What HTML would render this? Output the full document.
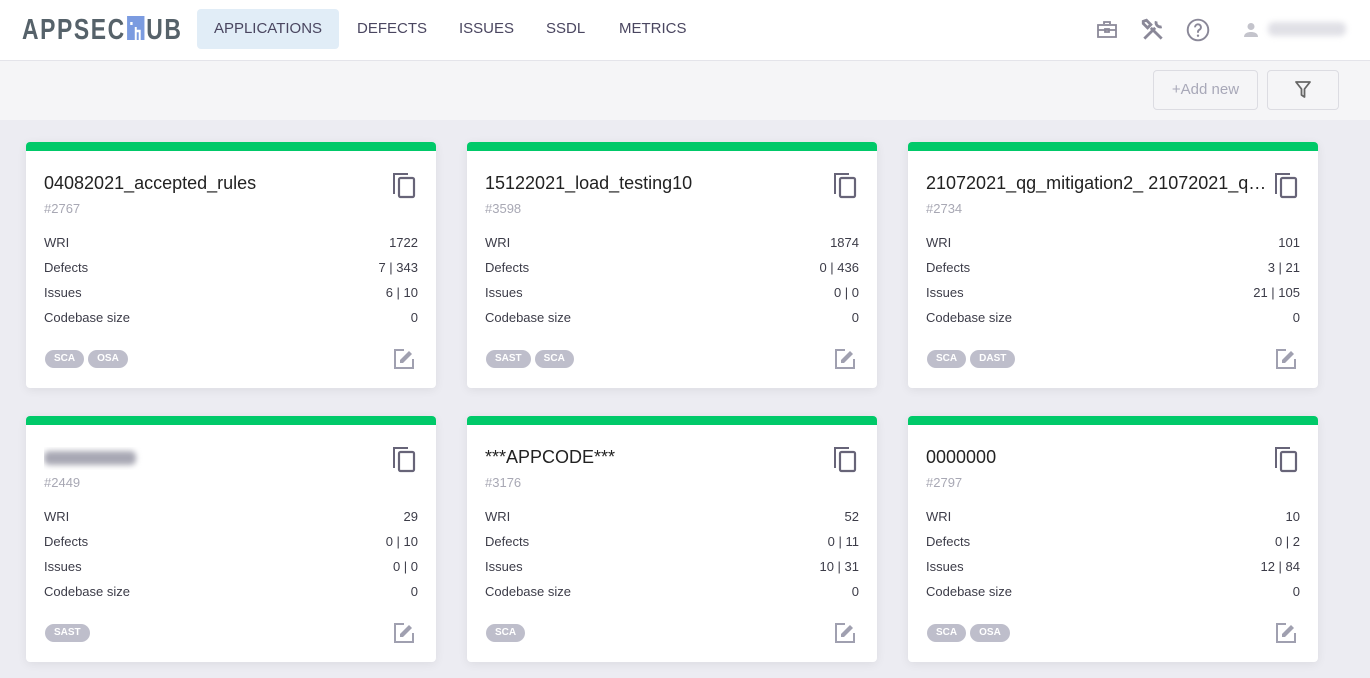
<!DOCTYPE html>
<html><head><meta charset="utf-8"><style>
*{box-sizing:border-box;margin:0;padding:0}
body{width:1370px;height:678px;overflow:hidden;background:#ececf2;font-family:"Liberation Sans",sans-serif;position:relative}
.hdr{position:absolute;left:0;top:0;width:1370px;height:61px;background:#fff;border-bottom:1px solid #e4e4ea}
.logo{position:absolute;left:22px;top:14px;font-size:29px;font-weight:bold;color:#56626a;letter-spacing:2px;transform:scaleX(0.79);transform-origin:left;white-space:nowrap}
.logo .h{display:inline-block;width:22px;height:24px;background:#7b9be0;vertical-align:-2px;margin:0 2px;position:relative}
.nav{position:absolute;top:9px;height:40px;line-height:40px;font-size:15px;color:#4a4660}
.toolbar{position:absolute;left:0;top:61px;width:1370px;height:59px;background:#f5f5f7}
.btn{position:absolute;top:70px;height:40px;border:1px solid #dcdce2;border-radius:4px;background:#f5f5f7;color:#a8a8b8;font-size:15px;text-align:center;line-height:38px}
.card{position:absolute;width:410px;height:246px;background:#fff;border-radius:4px;box-shadow:0 2px 10px rgba(0,0,0,.07);overflow:hidden}
.card .bar{height:9px;background:#00c969}
.t{position:absolute;left:18px;top:31px;font-size:18px;color:#222;white-space:nowrap;width:330px;overflow:hidden;text-overflow:ellipsis}
.id{position:absolute;left:18px;top:59px;font-size:13px;color:#a8a8b4}
.row{position:absolute;left:18px;right:18px;font-size:13px;color:#3c3c48}
.row span{float:right}
.tags{position:absolute;left:19px;top:206px}
.tag{display:inline-block;height:18px;line-height:18px;padding:0 9px;border-radius:9px;background:#bebecb;color:#fff;font-size:10px;font-weight:bold;margin-right:4px}
.cp{position:absolute;right:20px;top:29px}
.ed{position:absolute;right:20px;top:205px}
</style></head><body>
<div class="hdr">
<div class="logo">APPSEC<span class="h"><svg width="22" height="24"><rect x="4" y="5" width="3" height="3" fill="#fff"/><path d="M11 10v14M11 14h5v10" stroke="#fff" stroke-width="2.5" fill="none"/></svg></span>UB</div>
<div class="nav" style="left:197px;width:142px;background:#e1edf7;border-radius:4px;text-align:center">APPLICATIONS</div>
<div class="nav" style="left:357px">DEFECTS</div>
<div class="nav" style="left:459px">ISSUES</div>
<div class="nav" style="left:546px">SSDL</div>
<div class="nav" style="left:619px">METRICS</div>
<svg style="position:absolute;left:1095px;top:18px" width="24" height="24" viewBox="0 0 24 24"><path d="M9 6V4h6v2M3 7h18v12H3zM3 12h18M10 11h4v3h-4z" fill="none" stroke="#8a8898" stroke-width="1.8"/></svg>
<svg style="position:absolute;left:1140px;top:17px" width="26" height="26" viewBox="0 0 24 24"><path d="M4 20L14 10M10 10L20 20M15 4a4 4 0 0 0 5 5M3 4l3-1 4 4-3 3-4-4z" fill="none" stroke="#8a8898" stroke-width="2.6"/></svg>
<svg style="position:absolute;left:1185px;top:17px" width="26" height="26" viewBox="0 0 24 24"><circle cx="12" cy="12" r="9.5" fill="none" stroke="#8a8898" stroke-width="1.8"/><path d="M9.3 9.5a2.7 2.7 0 1 1 3.8 2.4c-.8.4-1.1 1-1.1 2v.6" fill="none" stroke="#8a8898" stroke-width="1.8"/><circle cx="12" cy="17.3" r="1.1" fill="#8a8898"/></svg>
<svg style="position:absolute;left:1242px;top:21px" width="18" height="18" viewBox="0 0 18 18"><circle cx="9" cy="5.5" r="3.5" fill="#c4c4cc"/><path d="M2 16c0-4 4-5 7-5s7 1 7 5z" fill="#c4c4cc"/></svg>
<div style="position:absolute;left:1268px;top:22px;width:78px;height:14px;background:#e0e0e6;border-radius:6px;filter:blur(3px)"></div>
</div>
<div class="toolbar"></div>
<div class="btn" style="left:1153px;width:105px">+Add new</div>
<div class="btn" style="left:1267px;width:72px"><svg width="18" height="20" viewBox="0 0 18 20" style="margin-top:9px"><path d="M2 2h14l-5.5 7v8l-3-2V9z" fill="none" stroke="#666" stroke-width="1.8" stroke-linejoin="round"/></svg></div>

<div class="card" style="left:26px;top:142px"><div class="bar"></div><div class="t">04082021_accepted_rules</div><div class="id">#2767</div>
<div class="row" style="top:93px">WRI<span>1722</span></div><div class="row" style="top:118px">Defects<span>7 | 343</span></div><div class="row" style="top:143px">Issues<span>6 | 10</span></div><div class="row" style="top:168px">Codebase size<span>0</span></div>
<div class="tags"><span class="tag">SCA</span><span class="tag">OSA</span></div>
<svg class="cp" width="24" height="28" viewBox="0 0 24 28"><path d="M2 23V3h14" fill="none" stroke="#676478" stroke-width="2"/><rect x="7" y="7" width="15" height="19" rx="1.5" fill="none" stroke="#676478" stroke-width="2.2"/></svg>
<svg class="ed" width="24" height="24" viewBox="0 0 24 24"><path d="M12 3H3v18h18v-9" fill="none" stroke="#a0a0b0" stroke-width="2"/><path d="M8 16v-3l9-9 3 3-9 9z" fill="#a0a0b0"/></svg></div>

<div class="card" style="left:467px;top:142px"><div class="bar"></div><div class="t">15122021_load_testing10</div><div class="id">#3598</div>
<div class="row" style="top:93px">WRI<span>1874</span></div><div class="row" style="top:118px">Defects<span>0 | 436</span></div><div class="row" style="top:143px">Issues<span>0 | 0</span></div><div class="row" style="top:168px">Codebase size<span>0</span></div>
<div class="tags"><span class="tag">SAST</span><span class="tag">SCA</span></div>
<svg class="cp" width="24" height="28" viewBox="0 0 24 28"><path d="M2 23V3h14" fill="none" stroke="#676478" stroke-width="2"/><rect x="7" y="7" width="15" height="19" rx="1.5" fill="none" stroke="#676478" stroke-width="2.2"/></svg>
<svg class="ed" width="24" height="24" viewBox="0 0 24 24"><path d="M12 3H3v18h18v-9" fill="none" stroke="#a0a0b0" stroke-width="2"/><path d="M8 16v-3l9-9 3 3-9 9z" fill="#a0a0b0"/></svg></div>

<div class="card" style="left:908px;top:142px"><div class="bar"></div><div class="t" style="width:342px">21072021_qg_mitigation2_ 21072021_qg_mitigation2</div><div class="id">#2734</div>
<div class="row" style="top:93px">WRI<span>101</span></div><div class="row" style="top:118px">Defects<span>3 | 21</span></div><div class="row" style="top:143px">Issues<span>21 | 105</span></div><div class="row" style="top:168px">Codebase size<span>0</span></div>
<div class="tags"><span class="tag">SCA</span><span class="tag">DAST</span></div>
<svg class="cp" width="24" height="28" viewBox="0 0 24 28"><path d="M2 23V3h14" fill="none" stroke="#676478" stroke-width="2"/><rect x="7" y="7" width="15" height="19" rx="1.5" fill="none" stroke="#676478" stroke-width="2.2"/></svg>
<svg class="ed" width="24" height="24" viewBox="0 0 24 24"><path d="M12 3H3v18h18v-9" fill="none" stroke="#a0a0b0" stroke-width="2"/><path d="M8 16v-3l9-9 3 3-9 9z" fill="#a0a0b0"/></svg></div>

<div class="card" style="left:26px;top:416px"><div class="bar"></div><div class="t"><span style="display:inline-block;width:92px;height:14px;background:#a8a8b4;border-radius:5px;filter:blur(3px);margin-top:4px"></span></div><div class="id">#2449</div>
<div class="row" style="top:93px">WRI<span>29</span></div><div class="row" style="top:118px">Defects<span>0 | 10</span></div><div class="row" style="top:143px">Issues<span>0 | 0</span></div><div class="row" style="top:168px">Codebase size<span>0</span></div>
<div class="tags"><span class="tag">SAST</span></div>
<svg class="cp" width="24" height="28" viewBox="0 0 24 28"><path d="M2 23V3h14" fill="none" stroke="#676478" stroke-width="2"/><rect x="7" y="7" width="15" height="19" rx="1.5" fill="none" stroke="#676478" stroke-width="2.2"/></svg>
<svg class="ed" width="24" height="24" viewBox="0 0 24 24"><path d="M12 3H3v18h18v-9" fill="none" stroke="#a0a0b0" stroke-width="2"/><path d="M8 16v-3l9-9 3 3-9 9z" fill="#a0a0b0"/></svg></div>

<div class="card" style="left:467px;top:416px"><div class="bar"></div><div class="t">***APPCODE***</div><div class="id">#3176</div>
<div class="row" style="top:93px">WRI<span>52</span></div><div class="row" style="top:118px">Defects<span>0 | 11</span></div><div class="row" style="top:143px">Issues<span>10 | 31</span></div><div class="row" style="top:168px">Codebase size<span>0</span></div>
<div class="tags"><span class="tag">SCA</span></div>
<svg class="cp" width="24" height="28" viewBox="0 0 24 28"><path d="M2 23V3h14" fill="none" stroke="#676478" stroke-width="2"/><rect x="7" y="7" width="15" height="19" rx="1.5" fill="none" stroke="#676478" stroke-width="2.2"/></svg>
<svg class="ed" width="24" height="24" viewBox="0 0 24 24"><path d="M12 3H3v18h18v-9" fill="none" stroke="#a0a0b0" stroke-width="2"/><path d="M8 16v-3l9-9 3 3-9 9z" fill="#a0a0b0"/></svg></div>

<div class="card" style="left:908px;top:416px"><div class="bar"></div><div class="t">0000000</div><div class="id">#2797</div>
<div class="row" style="top:93px">WRI<span>10</span></div><div class="row" style="top:118px">Defects<span>0 | 2</span></div><div class="row" style="top:143px">Issues<span>12 | 84</span></div><div class="row" style="top:168px">Codebase size<span>0</span></div>
<div class="tags"><span class="tag">SCA</span><span class="tag">OSA</span></div>
<svg class="cp" width="24" height="28" viewBox="0 0 24 28"><path d="M2 23V3h14" fill="none" stroke="#676478" stroke-width="2"/><rect x="7" y="7" width="15" height="19" rx="1.5" fill="none" stroke="#676478" stroke-width="2.2"/></svg>
<svg class="ed" width="24" height="24" viewBox="0 0 24 24"><path d="M12 3H3v18h18v-9" fill="none" stroke="#a0a0b0" stroke-width="2"/><path d="M8 16v-3l9-9 3 3-9 9z" fill="#a0a0b0"/></svg></div>
</body></html>
